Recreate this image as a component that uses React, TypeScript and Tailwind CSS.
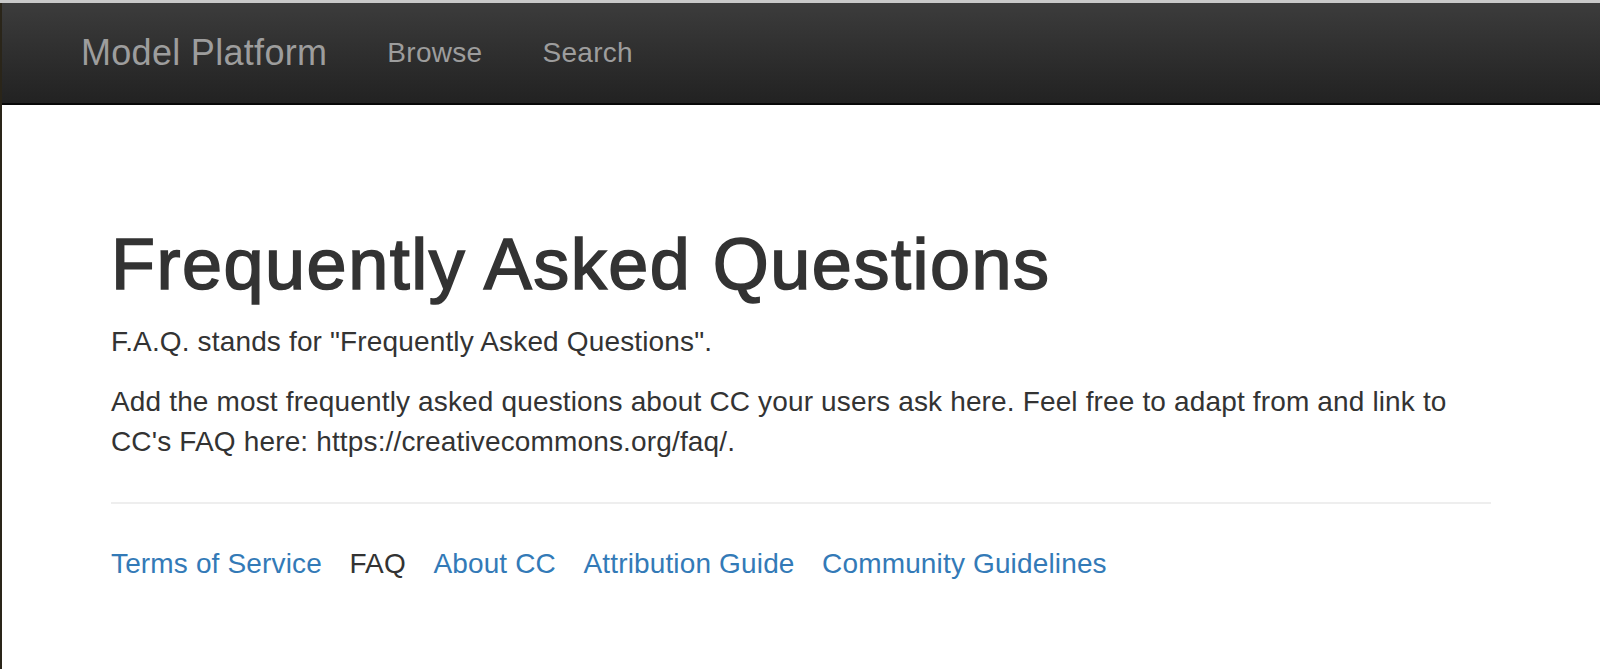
export default function App() {
  const font = { fontFamily: '"Liberation Sans", Arial, Helvetica, sans-serif' };
  return (
    <div className="min-h-screen bg-white flex flex-col" style={font}>
      <div className="h-[3px] bg-[#c9c9c9] shrink-0" />
      <div className="flex-1 flex flex-col border-l-2 border-[#2a2519]">
        <nav className="h-[102px] bg-gradient-to-b from-[#3c3c3c] to-[#222222] border-b-2 border-[#080808] shrink-0">
          <div className="max-w-[1500px] mx-auto flex">
            <a className="block pt-[30px] px-[30px] h-[100px] text-[36px] leading-[40px] tracking-[0.3px] text-[#9d9d9d]">
              Model Platform
            </a>
            <a className="block pt-[30px] px-[30px] text-[28px] leading-[40px] tracking-[0.3px] text-[#9d9d9d]">Browse</a>
            <a className="block pt-[30px] px-[30px] text-[28px] leading-[40px] tracking-[0.3px] text-[#9d9d9d]">Search</a>
          </div>
        </nav>
        <main className="max-w-[1500px] w-full mx-auto px-[60px] pt-[120px] text-[#333333]">
          <h1 className="text-[72px] leading-[1.1] font-normal tracking-[1.5px] [-webkit-text-stroke:1.6px_#333333] mb-[18px]">
            Frequently Asked Questions
          </h1>
          <p className="text-[28px] leading-[40px] tracking-[0.15px] mb-[20px]">
            F.A.Q. stands for "Frequently Asked Questions".
          </p>
          <p className="text-[28px] leading-[40px] tracking-[0.15px]">
            Add the most frequently asked questions about CC your users ask here. Feel free to adapt from and link to
            CC's FAQ here: https://creativecommons.org/faq/.
          </p>
          <hr className="mt-[40px] mb-[40px] border-0 border-t-2 border-[#eeeeee]" />
          <ul className="flex gap-[27.5px] text-[28px] leading-[40px] tracking-[0.15px]">
            <li className="text-[#337ab7]">Terms of Service</li>
            <li className="text-[#333333]">FAQ</li>
            <li className="text-[#337ab7]">About CC</li>
            <li className="text-[#337ab7]">Attribution Guide</li>
            <li className="text-[#337ab7]">Community Guidelines</li>
          </ul>
        </main>
      </div>
    </div>
  );
}
